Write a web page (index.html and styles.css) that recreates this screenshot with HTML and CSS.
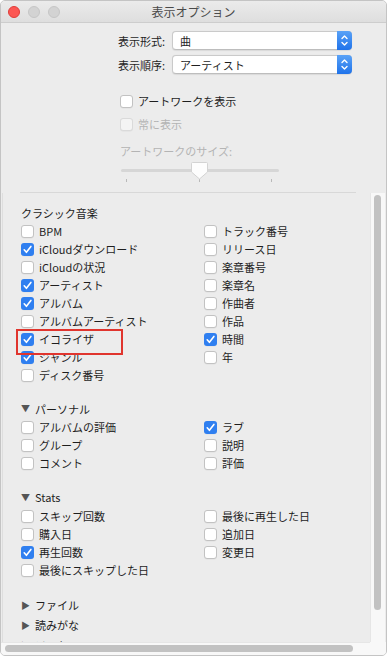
FILE: index.html
```html
<!DOCTYPE html>
<html lang="ja">
<head>
<meta charset="utf-8">
<link rel="stylesheet" href="styles.css">
</head>
<body>
<div class="window">
  <div class="titlebar">
    <div class="lights"><span class="light red"></span><span class="light"></span><span class="light"></span></div>
    <div class="title">表示オプション</div>
  </div>
  <div class="body">
    <div class="top">
      <div class="form-row">
        <div class="flabel">表示形式:</div>
        <div class="popup"><span class="ptext">曲</span><span class="stepper"><svg width="15" height="19" viewBox="0 0 15 19"><path d="M5 7.5 L7.5 5 L10 7.5 M5 11.5 L7.5 14 L10 11.5" fill="none" stroke="#fff" stroke-width="1.4" stroke-linecap="round" stroke-linejoin="round"/></svg></span></div>
      </div>
      <div class="form-row">
        <div class="flabel">表示順序:</div>
        <div class="popup"><span class="ptext">アーティスト</span><span class="stepper"><svg width="15" height="19" viewBox="0 0 15 19"><path d="M5 7.5 L7.5 5 L10 7.5 M5 11.5 L7.5 14 L10 11.5" fill="none" stroke="#fff" stroke-width="1.4" stroke-linecap="round" stroke-linejoin="round"/></svg></span></div>
      </div>
      <div class="art">
        <div class="row"><span class="cb"></span>アートワークを表示</div>
        <div class="row disabled r2"><span class="cb"></span>常に表示</div>
        <div class="row disabled r3">アートワークのサイズ:</div>
        <div class="slider">
          <svg width="162" height="24" viewBox="0 0 162 24">
            <rect x="1" y="9" width="158" height="3" rx="1.5" fill="#d6d6d6"/>
            <rect x="6" y="19" width="1" height="3" fill="#b9b9b9"/>
            <rect x="79" y="19" width="1" height="3" fill="#b9b9b9"/>
            <rect x="151" y="19" width="1" height="3" fill="#b9b9b9"/>
            <path d="M71.5 3.5 Q71.5 2.5 72.5 2.5 L86.5 2.5 Q87.5 2.5 87.5 3.5 L87.5 12 L79.5 19 L71.5 12 Z" fill="#fdfdfd" stroke="#d3d3d3" stroke-width="1"/>
          </svg>
        </div>
      </div>
      <div class="sep"></div>
    </div>
    <div class="scroll">
      <div class="content">
        <div class="heading">クラシック音楽</div>
        <div class="cols">
          <div class="col">
            <div class="row"><span class="cb"></span>BPM</div>
            <div class="row"><span class="cb on"></span>iCloudダウンロード</div>
            <div class="row"><span class="cb"></span>iCloudの状況</div>
            <div class="row"><span class="cb on"></span>アーティスト</div>
            <div class="row"><span class="cb on"></span>アルバム</div>
            <div class="row"><span class="cb"></span>アルバムアーティスト</div>
            <div class="row mark"><span class="cb on"></span>イコライザ</div>
            <div class="row"><span class="cb on"></span>ジャンル</div>
            <div class="row"><span class="cb"></span>ディスク番号</div>
          </div>
          <div class="col">
            <div class="row"><span class="cb"></span>トラック番号</div>
            <div class="row"><span class="cb"></span>リリース日</div>
            <div class="row"><span class="cb"></span>楽章番号</div>
            <div class="row"><span class="cb"></span>楽章名</div>
            <div class="row"><span class="cb"></span>作曲者</div>
            <div class="row"><span class="cb"></span>作品</div>
            <div class="row"><span class="cb on"></span>時間</div>
            <div class="row"><span class="cb"></span>年</div>
          </div>
        </div>

        <div class="heading tri-h"><span class="tri">▼</span>パーソナル</div>
        <div class="cols">
          <div class="col">
            <div class="row"><span class="cb"></span>アルバムの評価</div>
            <div class="row"><span class="cb"></span>グループ</div>
            <div class="row"><span class="cb"></span>コメント</div>
          </div>
          <div class="col">
            <div class="row"><span class="cb on"></span>ラブ</div>
            <div class="row"><span class="cb"></span>説明</div>
            <div class="row"><span class="cb"></span>評価</div>
          </div>
        </div>

        <div class="heading tri-h stats"><span class="tri">▼</span>Stats</div>
        <div class="cols">
          <div class="col">
            <div class="row"><span class="cb"></span>スキップ回数</div>
            <div class="row"><span class="cb"></span>購入日</div>
            <div class="row"><span class="cb on"></span>再生回数</div>
            <div class="row"><span class="cb"></span>最後にスキップした日</div>
          </div>
          <div class="col">
            <div class="row"><span class="cb"></span>最後に再生した日</div>
            <div class="row"><span class="cb"></span>追加日</div>
            <div class="row"><span class="cb"></span>変更日</div>
          </div>
        </div>

        <div class="closed first"><span class="tri small">▶</span>ファイル</div>
        <div class="closed"><span class="tri small">▶</span>読みがな</div>
        <div class="closed"><span class="tri small">▶</span>ソート</div>
      </div>
      <div class="vbar"><div class="vthumb"></div></div>
      <div class="hbar"><div class="hthumb"></div></div>
      <div class="corner"></div>
    </div>
  </div>
</div>
</body>
</html>
```

FILE: styles.css
```css
* { box-sizing: border-box; }
html, body { margin: 0; padding: 0; }
body {
  background: #ffffff;
  font-family: "Noto Sans CJK JP", "Noto Sans", sans-serif;
  font-size: 11px;
  color: #1e1e1e;
  width: 391px;
  height: 658px;
  overflow: hidden;
}
.window {
  width: 387px;
  height: 656px;
  border: 1px solid #c4c4c4;
  border-radius: 5px;
  overflow: hidden;
  display: flex;
  flex-direction: column;
  background: #ececec;
}
.titlebar {
  height: 22px;
  flex: none;
  border-bottom: 1px solid #cdcdcd;
  background: linear-gradient(#ebebeb, #dedede);
  display: flex;
  align-items: center;
  position: relative;
}
.lights {
  display: flex;
  gap: 8px;
  padding-left: 7px;
}
.light {
  width: 12px;
  height: 12px;
  border-radius: 50%;
  background: #d3d3d3;
  border: 1px solid #c6c6c6;
}
.light.red {
  background: #fc5753;
  border-color: #df3d39;
}
.title {
  position: absolute;
  left: 0;
  right: 0;
  top: 0;
  height: 21px;
  line-height: 21px;
  text-align: center;
  font-size: 12px;
  color: #4a4a4a;
}
.body {
  flex: 1;
  display: flex;
  flex-direction: column;
  min-height: 0;
}
.top {
  flex: none;
  padding-top: 8px;
}
.form-row {
  display: flex;
  align-items: center;
  height: 19px;
  margin-bottom: 5px;
}
.flabel {
  width: 165px;
  text-align: right;
  padding-right: 1px;
  margin-right: 6px;
  font-size: 11px;
  color: #1e1e1e;
}
.popup {
  width: 180px;
  height: 19px;
  background: #fff;
  border: 1px solid #cacaca;
  border-bottom-color: #bdbdbd;
  border-radius: 4px;
  display: flex;
  align-items: center;
  justify-content: space-between;
  box-shadow: 0 0.5px 1px rgba(0,0,0,0.08);
}
.ptext {
  padding-left: 7px;
  font-size: 11px;
  color: #1e1e1e;
}
.stepper {
  width: 15px;
  height: 19px;
  margin-right: -1px;
  border-radius: 0 4px 4px 0;
  background: linear-gradient(#5aa2f7, #1f73ea);
  display: flex;
}
.art {
  padding-left: 119px;
  margin-top: 18px;
}
.art .row {
  height: 18px;
}
.art .r2 { margin-top: 5px; }
.art .r3 { margin-top: 9px; }
.row {
  height: 18px;
  display: flex;
  align-items: center;
  white-space: nowrap;
}
.disabled { color: #b4b4b4; }
.cb {
  width: 13px;
  height: 13px;
  flex: none;
  margin-right: 5px;
  background: #fff;
  border: 1px solid #c2c2c2;
  border-radius: 3px;
  box-shadow: 0 0.5px 0.5px rgba(0,0,0,0.06);
}
.disabled .cb {
  background: #f4f4f4;
  border-color: #dadada;
}
.cb.on {
  border: none;
  background-color: #2f7ff0;
  background-image: url("data:image/svg+xml,%3Csvg xmlns='http://www.w3.org/2000/svg' width='13' height='13' viewBox='0 0 13 13'%3E%3Cpath d='M3.2 6.8 L5.4 9.3 L9.9 3.4' fill='none' stroke='white' stroke-width='1.6' stroke-linecap='round' stroke-linejoin='round'/%3E%3C/svg%3E");
}
.slider {
  height: 26px;
}
.slider svg { display: block; }
.sep {
  height: 1px;
  background: #d8d8d8;
  margin: 6px 30px 0 19px;
}
.scroll {
  flex: 1;
  min-height: 0;
  display: grid;
  grid-template-columns: 1fr 16px;
  grid-template-rows: 1fr 13px;
}
.content {
  overflow: hidden;
  padding: 10px 0 0 18px;
  border-left: 1px solid #dedede;
  margin-left: 1px;
}
.heading {
  height: 19px;
  display: flex;
  align-items: center;
}
.tri-h { margin-top: 15px; }
.stats { margin-top: 15px; height: 20px; }
.tri {
  font-size: 9px;
  color: #555;
  width: 14px;
  display: inline-block;
}
.cols {
  display: grid;
  grid-template-columns: 183px 1fr;
}
.mark { position: relative; }
.mark::after {
  content: "";
  position: absolute;
  left: -5px;
  top: -1px;
  width: 103px;
  height: 22px;
  border: 2px solid #e0352e;
}
.closed {
  height: 20px;
  display: flex;
  align-items: center;
  white-space: nowrap;
}
.closed.first { margin-top: 16px; }
.vbar {
  background: #f8f8f8;
  border-left: 1px solid #e6e6e6;
  padding: 2px 2px 0 3px;
  margin-right: 1px;
}
.vthumb {
  width: 7px;
  height: 415px;
  border-radius: 4px;
  background: #c2c2c2;
}
.hbar {
  background: #f8f8f8;
  border-top: 1px solid #e6e6e6;
  padding: 2px 0 0 4px;
}
.hthumb {
  width: 348px;
  height: 7px;
  border-radius: 4px;
  background: #c2c2c2;
}
.corner {
  background: #f8f8f8;
}
```
